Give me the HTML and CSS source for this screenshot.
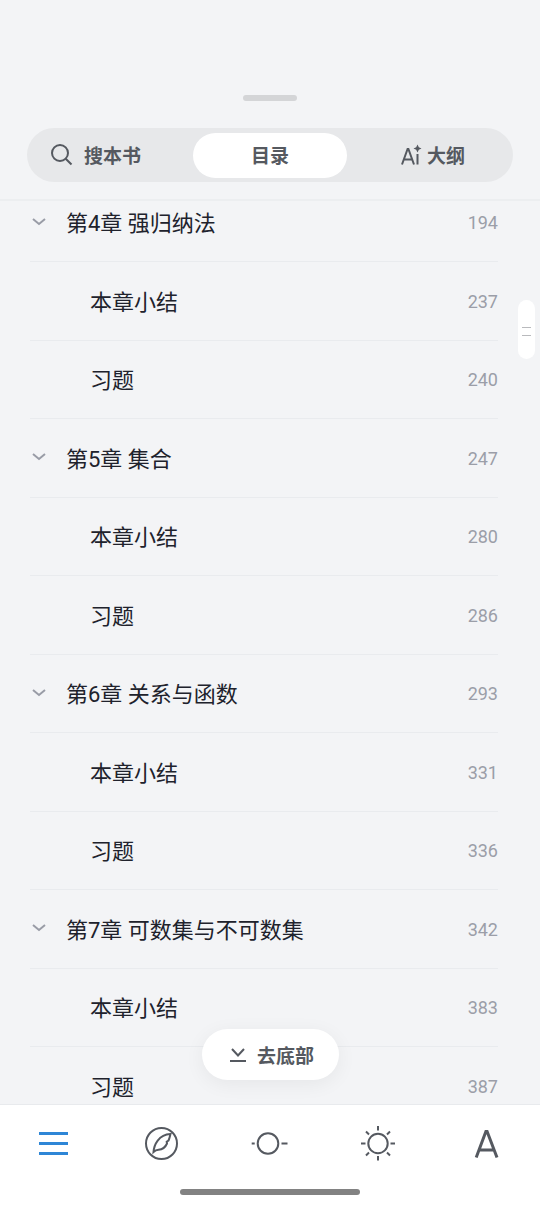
FILE: index.html
```html
<!DOCTYPE html>
<html lang="zh-CN">
<head>
<meta charset="utf-8">
<meta name="viewport" content="width=device-width, initial-scale=1">
<title>目录</title>
<link rel="stylesheet" href="styles.css">
</head>
<body>
<div class="reader">
  <header class="sheet-head">
    <div class="grabber"></div>
    <div class="tabs">
      <button class="tab" type="button">
        <svg class="icon-search" viewBox="0 0 24 24" width="24" height="24"><circle cx="10" cy="10" r="8"/><path d="M15.700 15.700 21.500 21.500"/></svg>
        <span>搜本书</span>
      </button>
      <button class="tab tab-active" type="button">目录</button>
      <button class="tab tab-outline" type="button">
        <svg class="icon-ai" viewBox="0 0 22 22" width="22" height="22"><path d="M2 20.500 7.600 5h.8L14 20.500M4 15.500h8M17.500 10V20.500"/><path class="spark" d="M17.500 0.500 18.800 3.200 21.500 4.500 18.800 5.800 17.500 8.500 16.200 5.800 13.500 4.500 16.200 3.200Z"/></svg>
        <span>大纲</span>
      </button>
    </div>
  </header>

  <main class="contents">
    <ol class="toc">
      <li class="row chapter"><button class="fold" type="button" aria-label="折叠"><svg viewBox="0 0 14 8" width="14" height="8"><path d="M1 1l6 5 6-5"/></svg></button><a class="title" href="#c4">第4章 强归纳法</a><span class="page">194</span></li>
      <li class="row"><a class="title" href="#s4">本章小结</a><span class="page">237</span></li>
      <li class="row"><a class="title" href="#e4">习题</a><span class="page">240</span></li>
      <li class="row chapter"><button class="fold" type="button" aria-label="折叠"><svg viewBox="0 0 14 8" width="14" height="8"><path d="M1 1l6 5 6-5"/></svg></button><a class="title" href="#c5">第5章 集合</a><span class="page">247</span></li>
      <li class="row"><a class="title" href="#s5">本章小结</a><span class="page">280</span></li>
      <li class="row"><a class="title" href="#e5">习题</a><span class="page">286</span></li>
      <li class="row chapter"><button class="fold" type="button" aria-label="折叠"><svg viewBox="0 0 14 8" width="14" height="8"><path d="M1 1l6 5 6-5"/></svg></button><a class="title" href="#c6">第6章 关系与函数</a><span class="page">293</span></li>
      <li class="row"><a class="title" href="#s6">本章小结</a><span class="page">331</span></li>
      <li class="row"><a class="title" href="#e6">习题</a><span class="page">336</span></li>
      <li class="row chapter"><button class="fold" type="button" aria-label="折叠"><svg viewBox="0 0 14 8" width="14" height="8"><path d="M1 1l6 5 6-5"/></svg></button><a class="title" href="#c7">第7章 可数集与不可数集</a><span class="page">342</span></li>
      <li class="row"><a class="title" href="#s7">本章小结</a><span class="page">383</span></li>
      <li class="row"><a class="title" href="#e7">习题</a><span class="page">387</span></li>
    </ol>
    <div class="scroll-thumb"></div>
    <button class="to-bottom" type="button">
      <svg viewBox="0 0 18 18" width="18" height="18"><path d="M3 3l6 6.500 6-6.500M1 15h16"/></svg>
      <span>去底部</span>
    </button>
  </main>

  <footer class="dock">
    <nav class="tools">
      <button class="tool tool-active" type="button" aria-label="目录"><svg viewBox="0 0 40 40" width="40" height="40"><path d="M5 10.500h29M5 20.500h29M5 30.500h29"/></svg></button>
      <button class="tool" type="button" aria-label="发现"><svg viewBox="0 0 40 40" width="40" height="40"><circle cx="19.500" cy="20.500" r="15.500"/><path d="M11.500 29C12 22 16.500 11.500 28.500 11C28 12.500 27.800 14.500 26.500 17.500L24.700 18.700L25 20.500C23.500 24 20.500 26.500 16.500 26.700C14.500 26.800 13 27.500 11.500 29Z"/></svg></button>
      <button class="tool" type="button" aria-label="进度"><svg viewBox="0 0 40 40" width="40" height="40"><circle cx="18" cy="20.500" r="10.300"/><path d="M1.700 20.500h3M31.500 20.500h6"/></svg></button>
      <button class="tool" type="button" aria-label="亮度"><svg viewBox="0 0 40 40" width="40" height="40"><circle cx="20" cy="20.500" r="9.700"/><path d="M20 3v4.500M20 33v4.500M3 20.500h4.500M32.500 20.500H37M8 8.500l3 3M29 29.500l3 3M8 32.500l3-3M29 11.500l3-3"/></svg></button>
      <button class="tool tool-font" type="button" aria-label="字体"><svg viewBox="0 0 40 40" width="40" height="40"><path d="M10.200 34.500 19.900 8.500h1.200L31 34.500M13.500 27h14"/></svg></button>
    </nav>
    <div class="home-bar"></div>
  </footer>
</div>
</body>
</html>
```
FILE: styles.css
```css
*,
*::before {
  box-sizing: border-box;
}

body {
  margin: 0;
  background: #f3f4f6;
  color: #20222c;
  font-family: Roboto, "Noto Sans CJK SC", sans-serif;
}

button {
  padding: 0;
  border: 0;
  background: none;
  color: #555960;
  font: inherit;
  cursor: pointer;
}

svg {
  display: block;
  flex: none;
  fill: none;
  stroke: currentColor;
  stroke-width: 2;
}

.reader {
  display: flex;
  flex-direction: column;
  height: 100vh;
}

.sheet-head {
  display: flex;
  flex-direction: column;
  gap: 27px;
  padding: 95px 27px 17px;
  border-bottom: 2px solid #eceef0;
}

.grabber {
  align-self: center;
  width: 54px;
  height: 6px;
  border-radius: 3px;
  background: #d4d5d7;
}

.tabs {
  display: grid;
  grid-template-columns: 1fr 154px 1fr;
  height: 54px;
  padding: 5px 0 4px;
  border-radius: 27px;
  background: #e7e8ea;
}

.tab {
  display: flex;
  align-items: center;
  gap: 10px;
  padding: 0 0 2px 23px;
  border-radius: 23px;
  font-size: 19px;
  font-weight: 700;
}

.tab-active {
  justify-content: center;
  padding-left: 0;
  background: #fff;
}

.tab-outline {
  gap: 5px;
  padding-left: 53px;
}

.icon-ai .spark {
  fill: currentColor;
  stroke: none;
}

.contents {
  position: relative;
  flex: 1;
  min-height: 0;
  overflow: hidden;
}

.toc {
  display: grid;
  grid-auto-rows: 78px 79px;
  margin: -17px 42px 0 30px;
  padding: 0;
  list-style: none;
}

.row {
  display: flex;
  align-items: center;
  padding-left: 60px;
  border-bottom: 1px solid #e9ebee;
}

.chapter {
  padding-left: 0;
}

.fold {
  display: flex;
  width: 36px;
  padding: 6px 2px 8px;
  color: #999ca6;
}

.title {
  flex: 1;
  padding-bottom: 3px;
  color: inherit;
  font-size: 22px;
  text-decoration: none;
}

.page {
  color: #9b9ea8;
  font-size: 18px;
}

.scroll-thumb {
  position: absolute;
  top: 99px;
  right: 5px;
  display: flex;
  flex-direction: column;
  justify-content: center;
  width: 17px;
  height: 59px;
  border-radius: 9px;
  background: #fff;
}

.scroll-thumb::before {
  content: "";
  height: 9px;
  margin: 3px 4px 0;
  border: solid #b9babd;
  border-width: 1px 0;
}

.to-bottom {
  position: absolute;
  bottom: 24px;
  left: 50%;
  display: flex;
  align-items: center;
  justify-content: center;
  gap: 10px;
  width: 137px;
  height: 51px;
  margin-left: -68px;
  padding-left: 2px;
  border-radius: 26px;
  background: #fff;
  box-shadow: 0 4px 20px rgba(0, 0, 0, 0.06);
  font-size: 19px;
  font-weight: 700;
}

.dock {
  display: flex;
  flex-direction: column;
  align-items: center;
  gap: 26px;
  padding: 18px 0 11px;
  border-top: 1px solid #e8eaed;
  background: #fff;
}

.tools {
  display: grid;
  grid-template-columns: repeat(5, 1fr);
  width: 100%;
}

.tool {
  display: flex;
  justify-content: center;
}

.tool-active {
  color: #2e86d6;
}

.tool-active svg,
.tool-font svg {
  stroke-width: 3;
}

.home-bar {
  width: 180px;
  height: 6px;
  border-radius: 3px;
  background: #828282;
}
```
